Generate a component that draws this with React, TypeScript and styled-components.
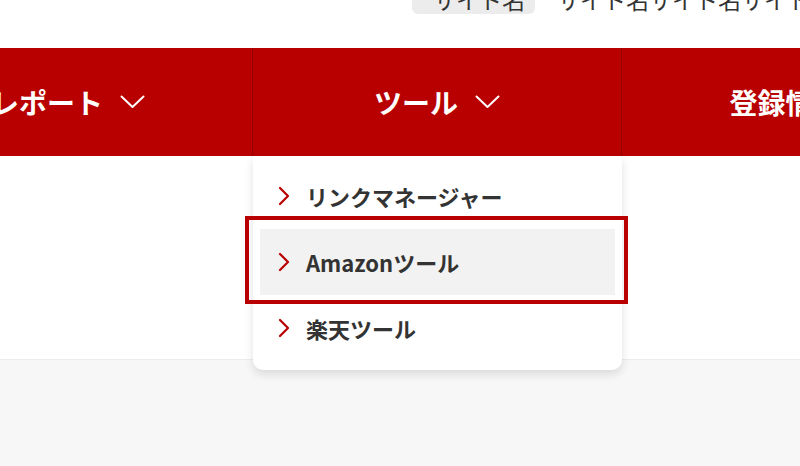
import React from "react";
import styled, { createGlobalStyle } from "styled-components";

const Global = createGlobalStyle`
  html, body { margin: 0; padding: 0; }
  body {
    width: 800px; height: 466px; overflow: hidden;
    background: #f7f7f7;
    font-family: "Noto Sans CJK JP", "Noto Sans", sans-serif;
  }
`;

const Page = styled.div`
  width: 800px;
  height: 466px;
  overflow: hidden;
  display: flex;
  flex-direction: column;
`;

const Top = styled.div`
  background: #fff;
  height: 360px;
  border-bottom: 1px solid #ececec;
  box-sizing: border-box;
  display: flex;
  flex-direction: column;
`;

const Header = styled.div`
  height: 48px;
  display: flex;
  align-items: flex-start;
  padding-left: 412px;
  gap: 22px;
  white-space: nowrap;
`;

const SiteLabel = styled.div`
  background: #ececec;
  border-radius: 0 0 6px 6px;
  height: 14px;
  padding: 0 21px;
  overflow: hidden;
  font-size: 23px;
  line-height: 14px;
  color: #333;
  display: flex;
  align-items: flex-end;
`;

const LabelText = styled.span`
  display: block;
  line-height: 1;
  margin-bottom: 3px;
`;

const SiteName = styled.div`
  height: 14px;
  overflow: hidden;
  font-size: 23px;
  color: #333;
  display: flex;
  align-items: flex-end;
`;

const Nav = styled.nav`
  height: 108px;
  background: #b80000;
  display: flex;
  margin-left: -116px;
`;

const NavItem = styled.div<{ $last?: boolean }>`
  position: relative;
  flex: 0 0 369px;
  display: flex;
  align-items: center;
  justify-content: center;
  gap: 17px;
  color: #fff;
  font-weight: 700;
  font-size: 28px;
  white-space: nowrap;
  border-right: ${(p) => (p.$last ? "none" : "1px solid #950000")};
  box-sizing: border-box;
`;

const Down = () => (
  <svg width="25" height="14" viewBox="0 0 25 14" fill="none">
    <path d="M1.5 1.5 L12.5 12 L23.5 1.5" stroke="#fff" strokeWidth="2" strokeLinecap="round" strokeLinejoin="round" />
  </svg>
);

const Dropdown = styled.div`
  position: absolute;
  top: 108px;
  left: 0;
  width: 369px;
  background: #fff;
  border-radius: 0 0 10px 10px;
  box-shadow: 0 4px 10px rgba(0, 0, 0, 0.12);
  padding: 7px 7px 9px;
  box-sizing: border-box;
  display: flex;
  flex-direction: column;
  z-index: 2;
`;

const MenuRow = styled.div<{ $active?: boolean }>`
  height: 66px;
  display: flex;
  align-items: center;
  gap: 16px;
  padding-left: 18px;
  background: ${(p) => (p.$active ? "#f2f2f2" : "transparent")};
  color: #333;
  font-size: 22px;
  font-weight: 700;
  white-space: nowrap;
`;

const Right = () => (
  <svg width="12" height="20" viewBox="0 0 12 20" fill="none">
    <path d="M2 2 L10 10 L2 18" stroke="#b80000" strokeWidth="2.2" strokeLinecap="round" strokeLinejoin="round" />
  </svg>
);

const Highlight = styled.div`
  position: absolute;
  left: -8px;
  top: 60px;
  width: 383px;
  height: 88px;
  border: 4.5px solid #b80000;
  box-sizing: border-box;
  pointer-events: none;
`;

const Bottom = styled.div`
  flex: 1;
  background: #f7f7f7;
`;

const items = ["リンクマネージャー", "Amazonツール", "楽天ツール"];

export default function App() {
  return (
    <>
      <Global />
      <Page>
        <Top>
          <Header>
            <SiteLabel>
              <LabelText>サイト名</LabelText>
            </SiteLabel>
            <SiteName>
              <LabelText>サイト名サイト名サイト名</LabelText>
            </SiteName>
          </Header>
          <Nav>
            <NavItem>
              レポート <Down />
            </NavItem>
            <NavItem>
              ツール <Down />
              <Dropdown>
                {items.map((t, i) => (
                  <MenuRow key={t} $active={i === 1}>
                    <Right />
                    {t}
                  </MenuRow>
                ))}
                <Highlight />
              </Dropdown>
            </NavItem>
            <NavItem $last>
              登録情報 <Down />
            </NavItem>
          </Nav>
        </Top>
        <Bottom />
      </Page>
    </>
  );
}
